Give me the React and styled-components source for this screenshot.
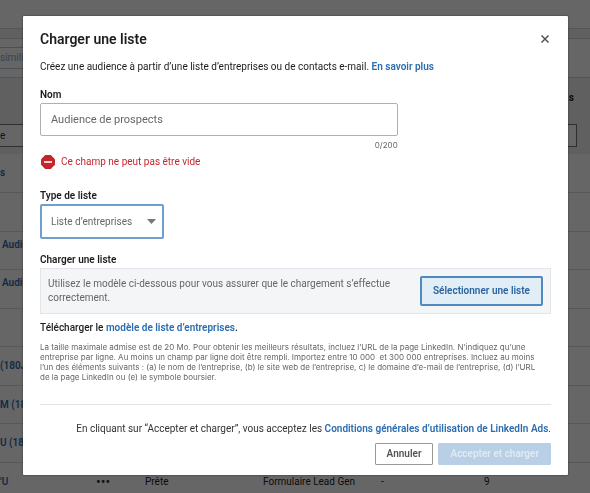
import React, {useState} from 'react';
import styled, {createGlobalStyle, css} from "styled-components"

const rows = [
    {name: "s", low: true},
    {name: ""},
    {name: "Audience"},
    {name: "Audience"},
    {name: ""},
    {name: "(180J)", low: true},
    {name: "M (180J)", low: true},
    {name: "U (180J)", low: true},
    {name: "'U", low: true, more: "•••", status: "Prête", source: "Formulaire Lead Gen", size: "-", count: "9"},
]

const GlobalStyle = createGlobalStyle`
  * {
    box-sizing: border-box;
  }
  body {
    margin: 0;
    background: #fff;
    font-family: Roboto, "Liberation Sans", sans-serif;
    font-size: 10px;
    line-height: 14px;
    color: #1d1d1d;
  }
  button, input, select {
    font: inherit;
  }
  p, h1, h2 {
    margin: 0;
  }
`
const Page = styled.main`
  height: 100vh;
  overflow: hidden;
  background: #fff;
`
const TopBar = styled.div`
  height: 28px;
`
const Band = styled.div`
  height: 11px;
  background: #f0f0f0;
  border-top: 1px solid #d4d4d4;
  border-bottom: 1px solid #d4d4d4;
`
const Filters = styled.div`
  height: 38px;
  padding: 8px 0;
  display: flex;
`
const FilterTag = styled.span`
  height: 22px;
  padding: 3px 8px 0 0;
  border: 1px solid #b4c8dc;
  border-left: 0;
  color: #86a9cc;
`
const TableHead = styled.div`
  height: 77px;
  padding: 13px 13px 0 0;
  background: #f0f0f0;
  border-top: 1px solid #d4d4d4;
`
const HeadLabel = styled.div`
  height: 33px;
  padding-right: 3px;
  font-weight: 700;
  text-align: right;
`
const SearchInput = styled.input`
  display: block;
  width: 100%;
  height: 23px;
  padding: 0;
  border: 1px solid #777;
  border-left: 0;
  background: #fff;
  color: #333;
`
const Table = styled.table`
  width: 100%;
  table-layout: fixed;
  border-collapse: collapse;
`
const Row = styled.tr`
  height: ${({$tall}) => $tall ? 39 : 38}px;
`
const Cell = styled.td`
  width: ${({$width}) => $width || "auto"};
  padding: ${({$low}) => $low ? 12 : 6}px 0 0;
  border-bottom: 1px solid #dcdcdc;
  vertical-align: top;
  white-space: nowrap;
  overflow: hidden;
  ${({$name, $low}) => $name && css`
    padding-left: ${$low ? 0 : 2}px;
    color: #2a6db0;
    font-weight: 600;
  `}
`
const More = styled.span`
  font-size: 14px;
  color: #333;
`
const Overlay = styled.div`
  position: fixed;
  inset: 0;
  padding: 16px 22px 16px 23px;
  overflow: auto;
  background: rgba(0, 0, 0, .6);
`
const Dialog = styled.form`
  padding: 13px 17px 10px;
  background: #fff;
  border-radius: 1px;
  box-shadow: 0 0 2px rgba(0, 0, 0, .6);
`
const Header = styled.header`
  display: flex;
  justify-content: space-between;
  align-items: center;
  height: 20px;
  margin-bottom: 11px;
`
const Title = styled.h1`
  font-size: 14px;
  line-height: 20px;
  font-weight: 600;
`
const CloseButton = styled.button`
  display: flex;
  padding: 2px;
  border: 0;
  background: none;
  color: #555;
`
const Link = styled.a`
  color: #2a6db0;
  font-weight: 600;
  text-decoration: none;
`
const Intro = styled.p`
  margin-bottom: 14px;
`
const Label = styled.label`
  display: block;
  font-weight: 600;
  margin-bottom: 1px;
`
const NameField = styled.div`
  width: 70%;
`
const NameInput = styled.input`
  display: block;
  width: 100%;
  height: 33px;
  padding: 0 10px;
  border: 1px solid #b0b0b0;
  border-radius: 2px;
  background: #fff;
  font-size: 11px;
  outline: 0;

  &::placeholder {
    color: #666;
    opacity: 1;
  }
`
const Counter = styled.div`
  margin-top: 2px;
  font-family: Inter, sans-serif;
  font-size: 8px;
  color: #666;
  text-align: right;
`
const ErrorMessage = styled.p`
  display: flex;
  align-items: center;
  gap: 6px;
  margin: 3px 0 20px 1px;
  color: #c4262e;
`
const SelectBox = styled.div`
  display: grid;
  align-items: center;
  width: 124px;
  margin-bottom: 14px;

  > * {
    grid-area: 1 / 1;
  }

  > svg {
    justify-self: end;
    margin-right: 8px;
    pointer-events: none;
  }
`
const Select = styled.select`
  appearance: none;
  width: 100%;
  height: 35px;
  padding: 0 9px;
  border: 2px solid #6f9fcd;
  border-radius: 2px;
  background: #fff;
  color: #666;
  outline: 0;
`
const UploadPanel = styled.div`
  display: flex;
  justify-content: space-between;
  align-items: center;
  gap: 16px;
  padding: 7px;
  border: 1px solid #e1e4e8;
  background: #f4f5f7;
  margin-bottom: 7px;
`
const UploadText = styled.p`
  font-size: 10px;
  color: #666;
`
const UploadButton = styled.button`
  flex-shrink: 0;
  height: 30px;
  padding: 0 11px;
  border: 2px solid #5089c0;
  border-radius: 2px;
  background: #e2eef6;
  color: #2a649f;
  font-weight: 600;
`
const Template = styled.p`
  font-weight: 500;
  margin-bottom: 7px;
`
const Notes = styled.p`
  padding: 0 4px 22px 0;
  border-bottom: 1px solid #e2e2e2;
  font-family: Inter, sans-serif;
  font-size: 8px;
  line-height: 10px;
  color: #666;
`
const Terms = styled.p`
  margin: 17px 0 7px;
  text-align: right;
  color: #333;
`
const Actions = styled.footer`
  display: flex;
  justify-content: flex-end;
  gap: 5px;
`
const ActionButton = styled.button`
  height: 22px;
  padding: 0 11px;
  border: 1px solid ${({$primary}) => $primary ? "#b8cfe5" : "#999"};
  border-radius: 1px;
  background: ${({$primary}) => $primary ? "#b8cfe5" : "#fff"};
  color: ${({$primary}) => $primary ? "#e0eaf4" : "#555"};
  font-weight: 600;
`

const Background = () => (
    <Page>
        <TopBar/>
        <Band/>
        <Filters>
            <FilterTag>similitude</FilterTag>
        </Filters>
        <TableHead>
            <HeadLabel>s</HeadLabel>
            <SearchInput aria-label="Recherche" defaultValue="e"/>
        </TableHead>
        <Table>
            <tbody>
            {
                rows.map((row, index) => (
                    <Row key={`row-${index}`} $tall={index % 2 === 1}>
                        <Cell $name $low={row.low} $width="96px">{row.name}</Cell>
                        <Cell $low={row.low} $width="49px"><More>{row.more}</More></Cell>
                        <Cell $low={row.low} $width="118px">{row.status}</Cell>
                        <Cell $low={row.low} $width="118px">{row.source}</Cell>
                        <Cell $low={row.low} $width="103px">{row.size}</Cell>
                        <Cell $low={row.low}>{row.count}</Cell>
                    </Row>
                ))
            }
            </tbody>
        </Table>
    </Page>
)

const App = () => {
    const [name, setName] = useState("")

    return (
        <>
            <GlobalStyle/>
            <Background/>
            <Overlay>
                <Dialog role="dialog" aria-labelledby="dialog-title" onSubmit={(e) => e.preventDefault()}>
                    <Header>
                        <Title id="dialog-title">Charger une liste</Title>
                        <CloseButton type="button" aria-label="Fermer">
                            <svg width="8" height="8" viewBox="0 0 8 8" stroke="currentColor" strokeWidth="1.5">
                                <path d="M.5.5l7 7M7.5.5l-7 7"/>
                            </svg>
                        </CloseButton>
                    </Header>
                    <Intro>
                        Créez une audience à partir d’une liste d’entreprises ou de contacts e-mail.{" "}
                        <Link href="#">En savoir plus</Link>
                    </Intro>
                    <NameField>
                        <Label htmlFor="name">Nom</Label>
                        <NameInput id="name" placeholder="Audience de prospects" maxLength={200} value={name}
                                   onChange={(e) => setName(e.target.value)}/>
                        <Counter>{name.length}/200</Counter>
                    </NameField>
                    <ErrorMessage>
                        <svg width="14" height="14" viewBox="0 0 14 14">
                            <path d="M4.2 0h5.6L14 4.2v5.6L9.8 14H4.2L0 9.8V4.2z" fill="#c4262e"/>
                            <path d="M3 7h8" stroke="#fff" strokeWidth="1.6"/>
                        </svg>
                        Ce champ ne peut pas être vide
                    </ErrorMessage>
                    <Label htmlFor="type">Type de liste</Label>
                    <SelectBox>
                        <Select id="type" defaultValue="companies">
                            <option value="companies">Liste d’entreprises</option>
                            <option value="contacts">Liste de contacts</option>
                        </Select>
                        <svg width="9" height="5" viewBox="0 0 9 5">
                            <path d="M0 0h9L4.5 5z" fill="#777"/>
                        </svg>
                    </SelectBox>
                    <Label htmlFor="upload">Charger une liste</Label>
                    <UploadPanel>
                        <UploadText>
                            Utilisez le modèle ci-dessous pour vous assurer que le chargement s’effectue correctement.
                        </UploadText>
                        <UploadButton id="upload" type="button" aria-label="Sélectionner une liste">
                            Sélectionner une liste
                        </UploadButton>
                    </UploadPanel>
                    <Template>
                        Télécharger le <Link href="#">modèle de liste d’entreprises</Link>.
                    </Template>
                    <Notes>
                        La taille maximale admise est de 20 Mo. Pour obtenir les meilleurs résultats, incluez l’URL
                        de la page LinkedIn. N’indiquez qu’une entreprise par ligne. Au moins un champ par ligne doit
                        être rempli. Importez entre 10 000 &nbsp;et 300 000 entreprises. Incluez au moins l’un des
                        éléments suivants : (a) le nom de l’entreprise, (b) le site web de l’entreprise, c) le domaine
                        d’e-mail de l’entreprise, (d) l’URL de la page LinkedIn ou (e) le symbole boursier.
                    </Notes>
                    <Terms>
                        En cliquant sur “Accepter et charger”, vous acceptez les{" "}
                        <Link href="#">Conditions générales d’utilisation de LinkedIn Ads</Link>.
                    </Terms>
                    <Actions>
                        <ActionButton type="button">Annuler</ActionButton>
                        <ActionButton type="submit" $primary disabled>Accepter et charger</ActionButton>
                    </Actions>
                </Dialog>
            </Overlay>
        </>
    );
};

export default App;
